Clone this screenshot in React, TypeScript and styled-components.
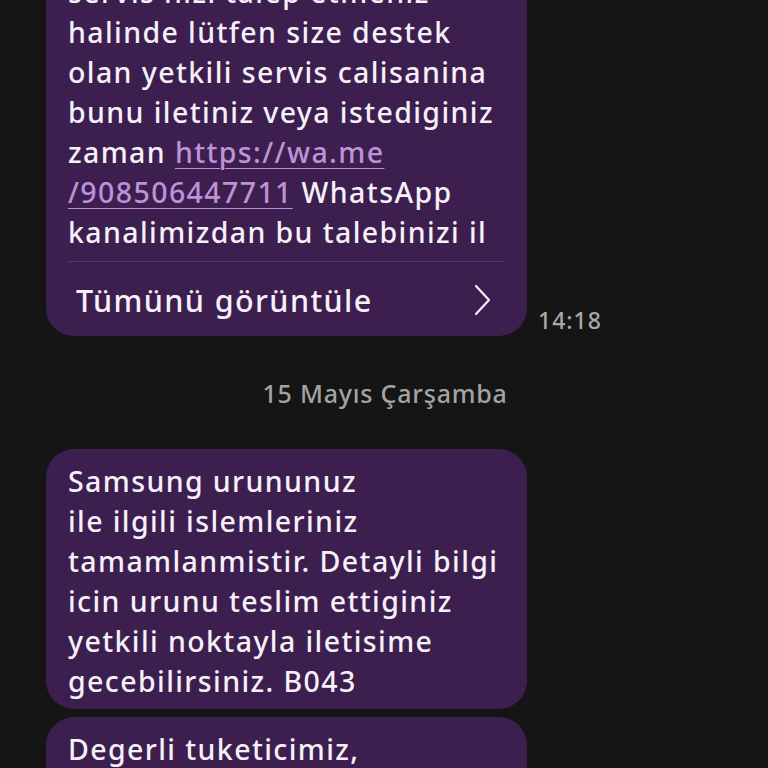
import React from 'react';
import styled, { createGlobalStyle } from 'styled-components';

const GlobalStyle = createGlobalStyle`
  html, body {
    margin: 0;
    padding: 0;
    background: #151515;
  }
  * {
    box-sizing: border-box;
  }
`;

const Screen = styled.main`
  width: 768px;
  height: 768px;
  overflow: hidden;
  background: #151515;
  font-family: 'Noto Sans', 'Open Sans', sans-serif;
  font-weight: 500;
`;

const Thread = styled.div`
  display: flex;
  flex-direction: column;
  margin-top: -40px;
`;

const Row = styled.div`
  display: flex;
  align-items: flex-end;
  gap: 11px;
  padding-left: 46px;
  margin-bottom: 8px;
`;

const Bubble = styled.div<{ $withFooter?: boolean }>`
  width: 481px;
  background: #3c1f4f;
  border-radius: 28px;
  padding: 12px 22px ${(p) => (p.$withFooter ? '0' : '8px')} 22px;
`;

const Body = styled.div`
  color: #f6f0f8;
  font-size: 28.5px;
  letter-spacing: 1.4px;
  line-height: 40px;
  white-space: pre-line;
`;

const WaLink = styled.span`
  color: #bf92d8;
  text-decoration: underline;
  text-decoration-thickness: 1px;
  text-underline-offset: 5px;
`;

const Divider = styled.div`
  height: 1px;
  background: #55386a;
  margin-top: 9px;
`;

const Footer = styled.div`
  display: flex;
  align-items: center;
  justify-content: space-between;
  height: 74px;
  padding: 2px 13px 0 8px;
  color: #f6f0f8;
  font-size: 30.5px;
  letter-spacing: 1.4px;
`;

const Time = styled.span`
  color: #a8a8a8;
  font-size: 23px;
  letter-spacing: 1px;
  padding-bottom: 0;
`;

const DateLabel = styled.div`
  text-align: center;
  color: #a3a3a3;
  font-size: 25px;
  letter-spacing: 0.8px;
  line-height: 32px;
  padding: 33px 0 40px 0;
  margin-left: 2px;
`;

const Chevron = () => (
  <svg width="20" height="32" viewBox="0 0 20 32" fill="none">
    <path d="M4 2 L17 16 L4 30" stroke="#f6f0f8" strokeWidth="2.2" strokeLinecap="round" strokeLinejoin="round" />
  </svg>
);

const App: React.FC = () => {
  return (
    <Screen>
      <GlobalStyle />
      <Thread>
        <Row>
          <Bubble $withFooter>
            <Body>
              {'servis hizi talep etmeniz\nhalinde lütfen size destek\nolan yetkili servis calisanina\nbunu iletiniz veya istediginiz\nzaman '}
              <WaLink>https://wa.me</WaLink>
              {'\n'}
              <WaLink>/908506447711</WaLink>
              {' WhatsApp\nkanalimizdan bu talebinizi il'}
            </Body>
            <Divider />
            <Footer>
              <span>Tümünü görüntüle</span>
              <Chevron />
            </Footer>
          </Bubble>
          <Time>14:18</Time>
        </Row>

        <DateLabel>15 Mayıs Çarşamba</DateLabel>

        <Row>
          <Bubble>
            <Body>
              {'Samsung urununuz\nile ilgili islemleriniz\ntamamlanmistir. Detayli bilgi\nicin urunu teslim ettiginiz\nyetkili noktayla iletisime\ngecebilirsiniz. B043'}
            </Body>
          </Bubble>
        </Row>

        <Row>
          <Bubble>
            <Body>{'Degerli tuketicimiz,\nservis hizmetimiz'}</Body>
          </Bubble>
        </Row>
      </Thread>
    </Screen>
  );
};

export default App;
